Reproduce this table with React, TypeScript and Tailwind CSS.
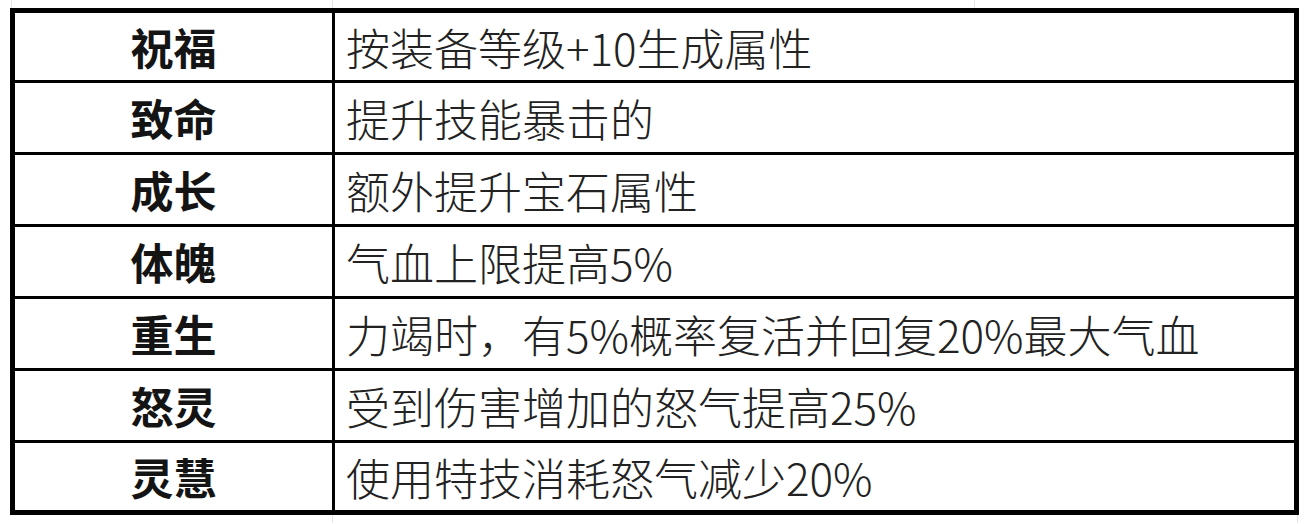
const rows = [
  { name: '祝福', desc: '按装备等级+10生成属性' },
  { name: '致命', desc: '提升技能暴击的' },
  { name: '成长', desc: '额外提升宝石属性' },
  { name: '体魄', desc: '气血上限提高5%' },
  { name: '重生', desc: '力竭时，有5%概率复活并回复20%最大气血' },
  { name: '怒灵', desc: '受到伤害增加的怒气提高25%' },
  { name: '灵慧', desc: '使用特技消耗怒气减少20%' },
]

const rowHeights = ['h-[67px]', 'h-[69px]', 'h-[69px]', 'h-[69px]', 'h-[69px]', 'h-[69px]', 'h-[67px]']

export default function App() {
  return (
    <div
      className="w-[1304px] h-[524px] bg-white overflow-hidden"
      style={{ fontFamily: '"Noto Sans CJK SC", "Noto Sans", sans-serif' }}
    >
      {/* faint sheet gridlines above the table */}
      <div className="flex h-[8px]">
        <div className="w-[12px] border-r border-[#e4e4e4]" />
        <div className="w-[321px] border-r border-[#e4e4e4]" />
        <div className="w-[642px] border-r border-[#e4e4e4]" />
      </div>

      <div className="ml-[10px] w-[1289px] border-[5px] border-black">
        {rows.map((row, i) => (
          <div
            key={row.name}
            className={`flex ${rowHeights[i]} ${i < rows.length - 1 ? 'box-content border-b-[3px] border-black' : ''}`}
          >
            <div className="w-[317px] shrink-0 flex items-center justify-center text-[43px] font-bold text-[#141414] leading-none">
              {row.name}
            </div>
            <div className="w-[3px] shrink-0 bg-black" />
            <div className="flex-1 flex items-center pl-[11px] text-[44px] font-light text-[#222222] leading-none whitespace-nowrap">
              {row.desc}
            </div>
          </div>
        ))}
      </div>

      {/* faint sheet gridlines below the table */}
      <div className="flex h-[8px]">
        <div className="w-[333px] border-r border-[#e4e4e4]" />
        <div className="w-[965px] border-r border-[#e4e4e4]" />
      </div>
    </div>
  )
}
